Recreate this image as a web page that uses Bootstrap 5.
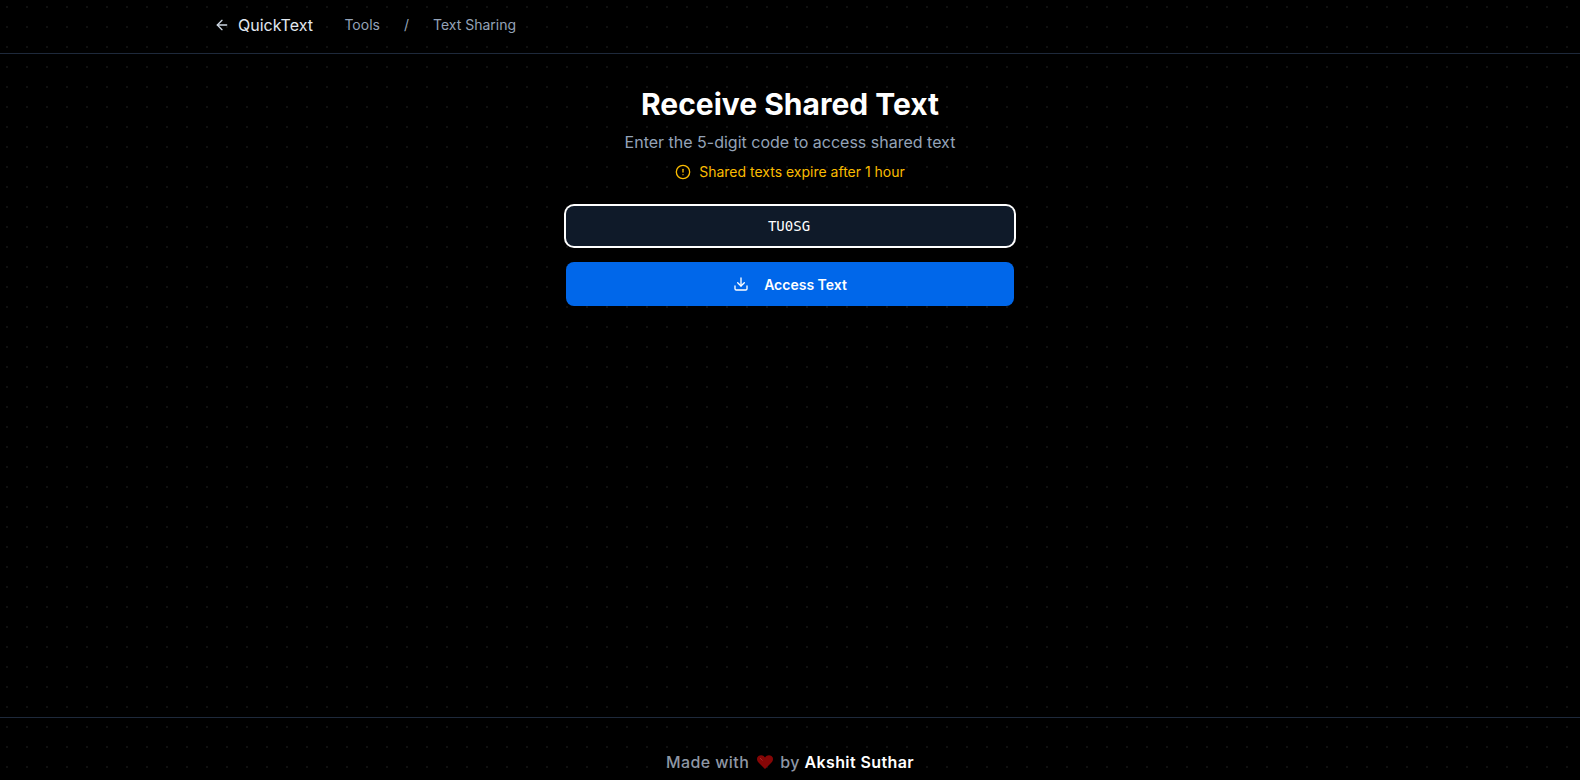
<!DOCTYPE html>
<html lang="en">
<head>
<meta charset="utf-8">
<title>QuickText</title>
<link href="https://cdn.jsdelivr.net/npm/bootstrap@5.3.0/dist/css/bootstrap.min.css" rel="stylesheet">
<style>
html, body { height: 780px; overflow: hidden; }
body {
  font-family: Inter, "Liberation Sans", sans-serif;
  background-color: #000;
  background-image: radial-gradient(circle at 7px 7px, #101010 1px, transparent 1px);
  background-size: 20px 20px;
  color: #fff;
}
.qt-page { height: 780px; }
.qt-head { height: 54px; border-bottom: 1px solid #1e293b; flex: none; padding-bottom: 4px; }
.qt-wrap { width: 1152px; }
.qt-brand { color: #e2e8f0; font-size: 16px; font-weight: 400; text-decoration: none; gap: 8px; }
.qt-brand svg { color: #cbd5e1; }
.qt-crumb { color: #94a3b8; font-size: 14px; text-decoration: none; }
.qt-crumbs { margin-left: 31.5px; gap: 24px; }
.qt-main { flex: 1 1 auto; padding-top: 32px; }
.qt-col { width: 448px; }
.qt-title { font-size: 30px; line-height: 36px; font-weight: 700; margin: 0 0 8px; }
.qt-sub { font-size: 16px; line-height: 24px; color: #94a3b8; margin: 0 0 8px; }
.qt-warn { font-size: 14px; line-height: 20px; color: #fbbc00; gap: 8px; margin-bottom: 24px; }
.qt-input, .qt-input:focus {
  background: #0f1a29; color: #fff; border: 0; border-radius: 8px; height: 40px; padding-right: 14px;
  font-family: "DejaVu Sans Mono", monospace; font-size: 14px; text-align: center;
  box-shadow: 0 0 0 2px #fff; outline: 0;
}
.qt-btn, .qt-btn:hover {
  background: #0067ea; color: #fff; border: 0; border-radius: 8px; height: 44px;
  font-size: 14px; font-weight: 600; gap: 15px; margin-top: 16px;
}
.qt-foot { height: 63px; border-top: 1px solid #1e293b; flex: none; padding-top: 32px; font-size: 16px; line-height: 24px; color: #8e97a5; font-weight: 500; letter-spacing: .4px; gap: 8px; }
.qt-foot b { color: #fff; font-weight: 600; }
.qt-heart { margin: 5px -1px 0 0; }
</style>
</head>
<body>
<div class="qt-page d-flex flex-column">
  <header class="qt-head d-flex justify-content-center">
    <nav class="qt-wrap d-flex align-items-center">
      <a class="qt-brand d-flex align-items-center" href="#">
        <svg width="16" height="16" viewBox="0 0 24 24" fill="none" stroke="currentColor" stroke-width="2" stroke-linecap="round" stroke-linejoin="round"><path d="M19 12H5"/><path d="m12 19-7-7 7-7"/></svg>
        <span>QuickText</span>
      </a>
      <div class="qt-crumbs d-flex align-items-center">
        <a class="qt-crumb" href="#">Tools</a>
        <span class="qt-crumb">/</span>
        <a class="qt-crumb" href="#">Text Sharing</a>
      </div>
    </nav>
  </header>
  <main class="qt-main d-flex justify-content-center">
    <div class="qt-col text-center">
      <h1 class="qt-title">Receive Shared Text</h1>
      <p class="qt-sub">Enter the 5-digit code to access shared text</p>
      <div class="qt-warn d-flex align-items-center justify-content-center">
        <svg width="16" height="16" viewBox="0 0 24 24" fill="none" stroke="currentColor" stroke-width="2" stroke-linecap="round" stroke-linejoin="round"><circle cx="12" cy="12" r="10"/><path d="M12 8v4"/><path d="M12 16h.01"/></svg>
        <span>Shared texts expire after 1 hour</span>
      </div>
      <input class="form-control qt-input" type="text" value="TU0SG" maxlength="5" aria-label="Code">
      <button class="btn qt-btn w-100 d-flex align-items-center justify-content-center" type="button">
        <svg width="16" height="16" viewBox="0 0 24 24" fill="none" stroke="currentColor" stroke-width="2" stroke-linecap="round" stroke-linejoin="round"><path d="M21 15v4a2 2 0 0 1-2 2H5a2 2 0 0 1-2-2v-4"/><path d="m7 10 5 5 5-5"/><path d="M12 15V3"/></svg>
        <span>Access Text</span>
      </button>
    </div>
  </main>
  <footer class="qt-foot d-flex justify-content-center">
    <span>Made with</span>
    <svg class="qt-heart align-self-start" width="16" height="14" viewBox="0 0 32 28"><path fill="#860606" d="M16 28 3 15C-1 11-1 5 3 2c4-3 10-2 13 3 3-5 9-6 13-3 4 3 4 9 0 13z"/><path d="M6 6l5 5" stroke="#b53a3a" stroke-width="1.4" fill="none"/></svg>
    <span>by <b>Akshit Suthar</b></span>
  </footer>
</div>
<script src="https://cdn.jsdelivr.net/npm/bootstrap@5.3.0/dist/js/bootstrap.bundle.min.js"></script>
</body>
</html>
